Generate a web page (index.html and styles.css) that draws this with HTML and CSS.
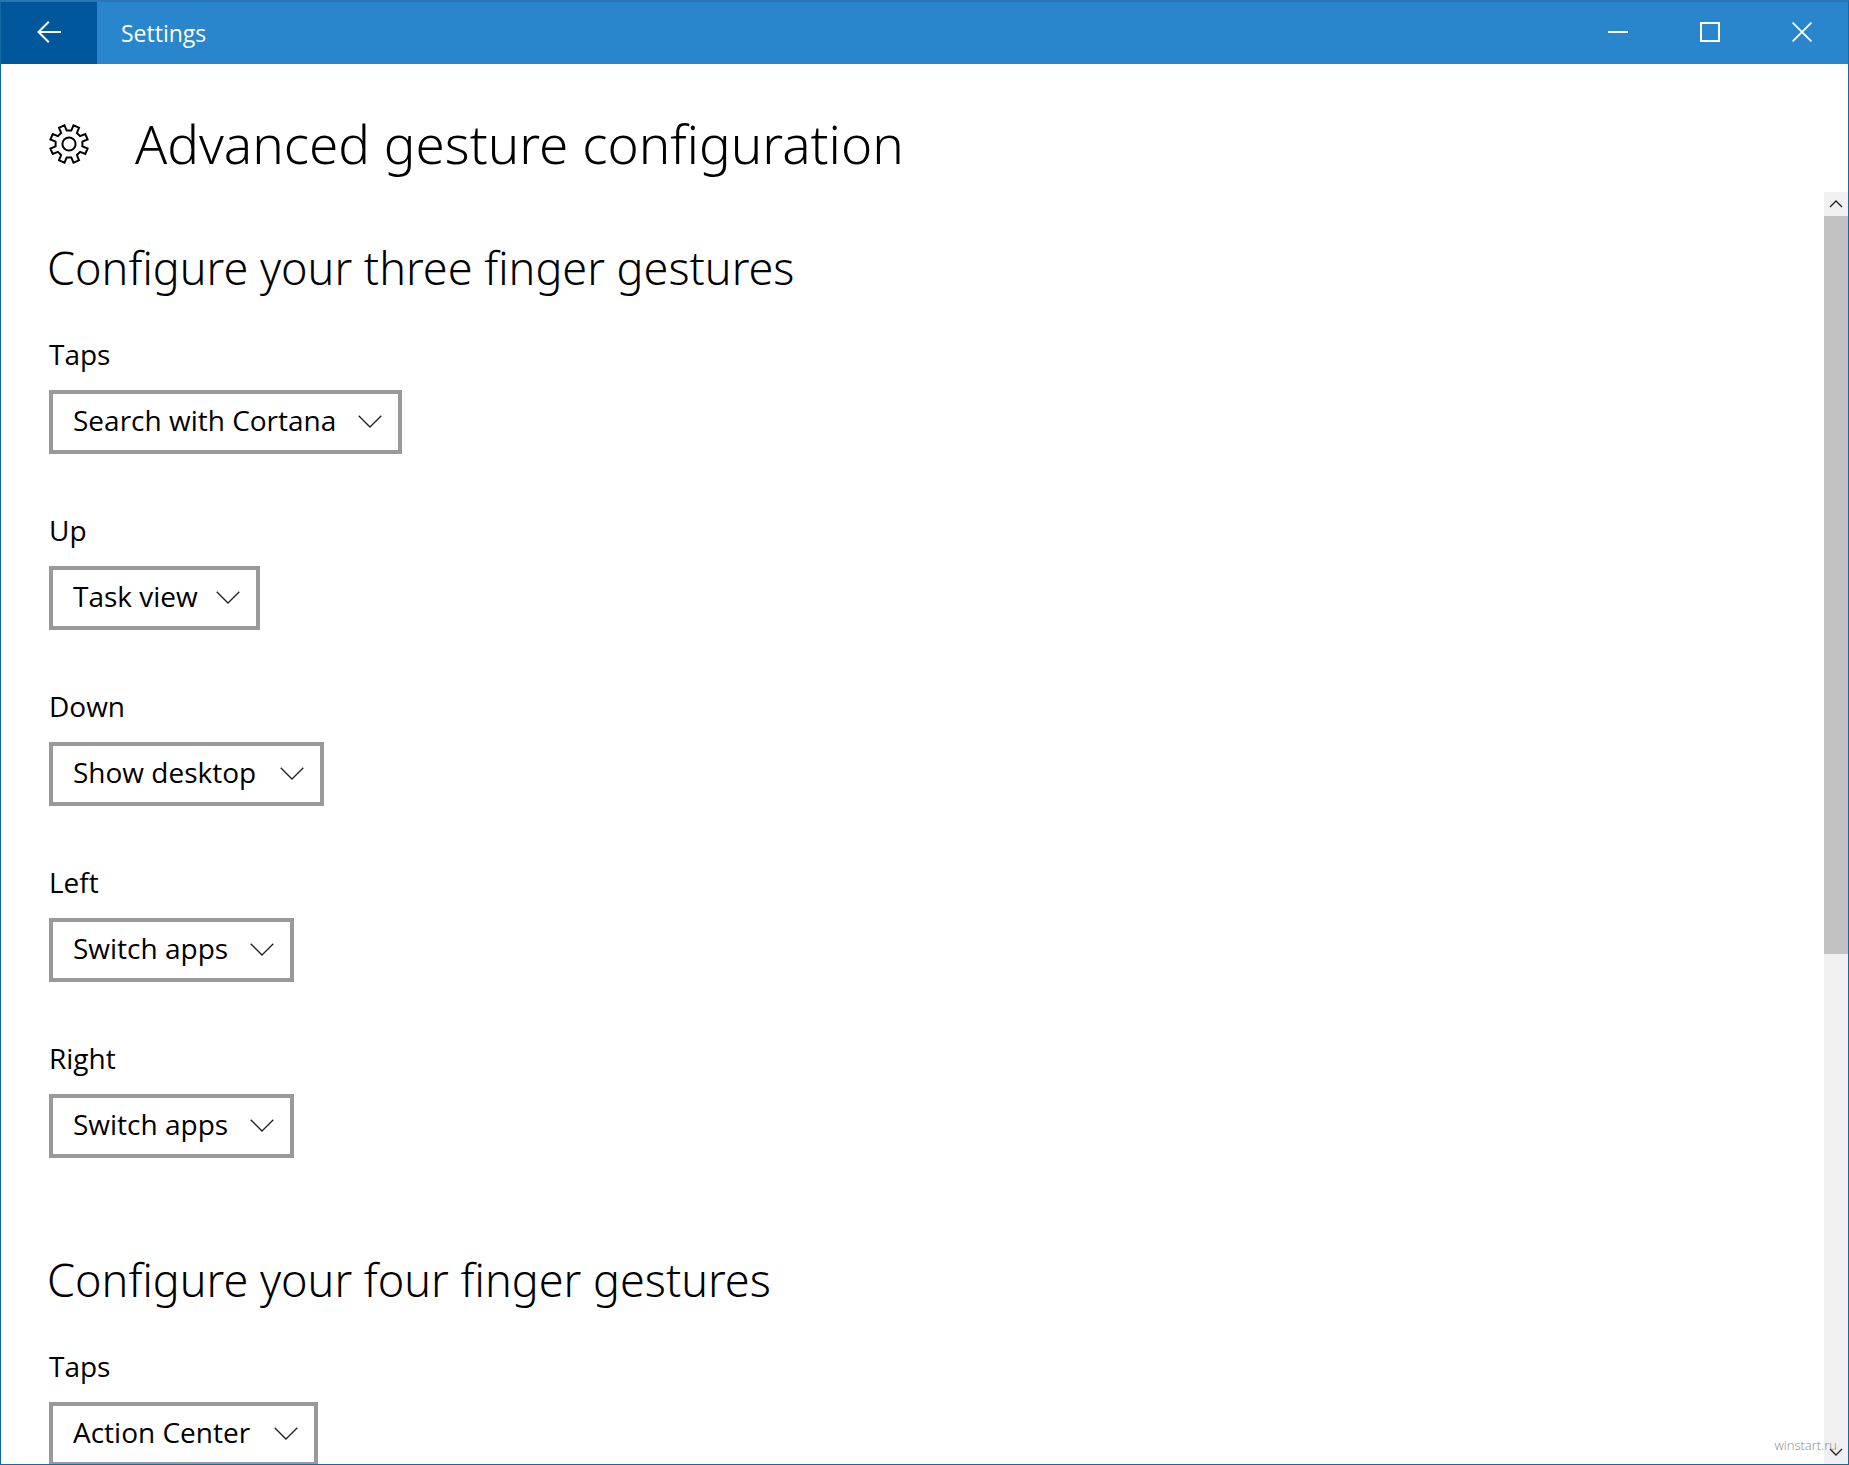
FILE: index.html
```html
<!DOCTYPE html>
<html lang="en">
<head>
<meta charset="utf-8">
<meta name="viewport" content="width=device-width, initial-scale=1">
<title>Settings</title>
<link rel="stylesheet" href="styles.css">
</head>
<body>
<svg class="symbols" aria-hidden="true">
  <symbol id="chevron" viewBox="0 0 24 14"><path d="M0.7 0.7L12 12L23.3 0.7" fill="none" stroke="#222" stroke-width="1.3"/></symbol>
</svg>
<div class="window">
  <header class="titlebar">
    <button class="back" type="button" aria-label="Back">
      <svg width="24" height="22" viewBox="0 0 24 22" fill="none" stroke="#fff" stroke-width="2"><path d="M24 11H1.5M11.8 0.7L1.5 11L11.8 21.3"/></svg>
    </button>
    <span class="app-name">Settings</span>
    <div class="controls">
      <button class="control" type="button" aria-label="Minimize"><svg width="20" height="20" viewBox="0 0 20 20"><path d="M0 10H20" stroke="#fff" stroke-width="2"/></svg></button>
      <button class="control" type="button" aria-label="Maximize"><svg width="20" height="20" viewBox="0 0 20 20"><path d="M1 1H19V19H1Z" fill="none" stroke="#fff" stroke-width="2"/></svg></button>
      <button class="control" type="button" aria-label="Close"><svg width="20" height="20" viewBox="0 0 20 20"><path d="M0.6 0.6L19.4 19.4M19.4 0.6L0.6 19.4" stroke="#fff" stroke-width="1.8"/></svg></button>
    </div>
  </header>
  <div class="page-head">
    <svg class="gear" width="40" height="40" viewBox="-20 -20 40 40" fill="none" stroke="#000" stroke-width="2" stroke-linejoin="miter">
      <circle r="6.6"/>
      <path d="M-4.5 -18.6L-2.3 -13.4H2.3L4.5 -18.6L10 -16.3L7.9 -11.1L11.1 -7.9L16.3 -10L18.6 -4.5L13.4 -2.3V2.3L18.6 4.5L16.3 10L11.1 7.9L7.9 11.1L10 16.3L4.5 18.6L2.3 13.4H-2.3L-4.5 18.6L-10 16.3L-7.9 11.1L-11.1 7.9L-16.3 10L-18.6 4.5L-13.4 2.3V-2.3L-18.6 -4.5L-16.3 -10L-11.1 -7.9L-7.9 -11.1L-10 -16.3Z"/>
    </svg>
    <h1>Advanced gesture configuration</h1>
  </div>
  <div class="body">
    <main class="content">
      <section class="group">
        <h2>Configure your three finger gestures</h2>
        <div class="field">
          <label for="three-taps">Taps</label>
          <div class="combo w-353"><select id="three-taps"><option>Search with Cortana</option></select><svg class="chevron" aria-hidden="true"><use href="#chevron"/></svg></div>
        </div>
        <div class="field">
          <label for="three-up">Up</label>
          <div class="combo w-211"><select id="three-up"><option>Task view</option></select><svg class="chevron" aria-hidden="true"><use href="#chevron"/></svg></div>
        </div>
        <div class="field">
          <label for="three-down">Down</label>
          <div class="combo w-275"><select id="three-down"><option>Show desktop</option></select><svg class="chevron" aria-hidden="true"><use href="#chevron"/></svg></div>
        </div>
        <div class="field">
          <label for="three-left">Left</label>
          <div class="combo w-245"><select id="three-left"><option>Switch apps</option></select><svg class="chevron" aria-hidden="true"><use href="#chevron"/></svg></div>
        </div>
        <div class="field">
          <label for="three-right">Right</label>
          <div class="combo w-245"><select id="three-right"><option>Switch apps</option></select><svg class="chevron" aria-hidden="true"><use href="#chevron"/></svg></div>
        </div>
      </section>
      <section class="group">
        <h2>Configure your four finger gestures</h2>
        <div class="field">
          <label for="four-taps">Taps</label>
          <div class="combo w-269"><select id="four-taps"><option>Action Center</option></select><svg class="chevron" aria-hidden="true"><use href="#chevron"/></svg></div>
        </div>
      </section>
    </main>
    <div class="scrollbar">
      <button class="scroll-button" type="button" aria-label="Scroll up"><svg width="14" height="8" viewBox="0 0 14 8"><path d="M1 7L7 1L13 7" fill="none" stroke="#222" stroke-width="1.4"/></svg></button>
      <div class="track"><div class="thumb"></div></div>
      <button class="scroll-button" type="button" aria-label="Scroll down"><svg width="14" height="8" viewBox="0 0 14 8"><path d="M1 1L7 7L13 1" fill="none" stroke="#222" stroke-width="1.4"/></svg></button>
    </div>
  </div>
  <span class="watermark">winstart.ru</span>
</div>
</body>
</html>
```

FILE: styles.css
```css
* { box-sizing: border-box; }

body {
  margin: 0;
  color: #000;
  background: #fff;
  font-family: "Open Sans", "Noto Sans", sans-serif;
  font-size: 28px;
}

button {
  display: flex;
  align-items: center;
  justify-content: center;
  padding: 0;
  border: 0;
  background: none;
}

h1, h2 {
  margin: 0;
  font-family: "Noto Sans", "Open Sans", sans-serif;
  font-weight: 300;
}

.symbols { display: none; }

.window {
  position: relative;
  display: flex;
  flex-direction: column;
  height: 100vh;
  border: 1px solid #1768a6;
  border-top: 2px solid #2a76b2;
  overflow: hidden;
}

/* Title bar */
.titlebar {
  display: flex;
  flex: none;
  height: 62px;
  background: #2986cc;
}

.back {
  width: 96px;
  padding-bottom: 2px;
  background: #00579b;
}

.app-name {
  padding-left: 24px;
  color: #fff;
  font-size: 23px;
  line-height: 62px;
}

.controls { display: flex; margin-left: auto; }

.control {
  width: 92px;
  padding-bottom: 2px;
}

/* Page heading */
.page-head {
  display: flex;
  flex: none;
  align-items: center;
  gap: 46px;
  height: 128px;
  padding: 32px 48px 0;
}

.gear { flex: none; }

h1 { font-size: 53px; line-height: 72px; }

/* Scrolling area */
.body {
  display: flex;
  flex: 1;
  min-height: 0;
}

.content {
  display: flex;
  flex: 1;
  flex-direction: column;
  gap: 90px;
  padding: 44px 48px 0;
  overflow: hidden;
}

.group {
  display: flex;
  flex: none;
  flex-direction: column;
  gap: 56px;
}

h2 {
  margin: 0 0 -22px -2px;
  font-size: 45px;
  line-height: 64px;
}

.field {
  display: flex;
  flex-direction: column;
  align-items: flex-start;
  gap: 16px;
}

.field label { line-height: 40px; }

.combo { position: relative; }

.combo select {
  display: block;
  width: 100%;
  height: 64px;
  padding: 0 20px 4px;
  border: 4px solid #999;
  border-radius: 0;
  color: #000;
  background: #fff;
  font: inherit;
  appearance: none;
}

.chevron {
  position: absolute;
  top: 25px;
  right: 20px;
  width: 24px;
  height: 14px;
  pointer-events: none;
}

.w-353 { width: 353px; }
.w-275 { width: 275px; }
.w-269 { width: 269px; }
.w-245 { width: 245px; }
.w-211 { width: 211px; }

/* Scrollbar */
.scrollbar {
  display: flex;
  flex: none;
  flex-direction: column;
  width: 24px;
  background: #f0f0f0;
}

.scroll-button { height: 24px; }

.track { flex: 1; }

.thumb { height: 60.3%; background: #c2c2c2; }

.watermark {
  position: absolute;
  right: 11px;
  bottom: 9px;
  color: #888;
  font-size: 13px;
  font-weight: 300;
  line-height: 20px;
}
```
